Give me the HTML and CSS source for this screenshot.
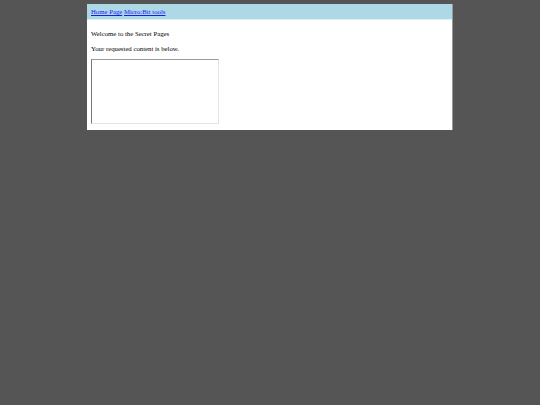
FILE: index.html
```html
<!DOCTYPE html>
<html lang="en">
<head>
    <meta charset="UTF-8">
    <meta name="viewport" content="width=device-width, initial-scale=1.0">
    <title>Secret Pages</title>
    <link rel="stylesheet" href="styles.css">
</head>
<body>
    <div class="page">
        <div class="nav">
            <a href="#">Home Page</a> <a href="#">Micro:Bit tools</a>
        </div>
        <div class="content">
            <p>Welcome to the Secret Pages</p>
            <p class="last">Your requested content is below.</p>
            <div class="frame"></div>
        </div>
    </div>
</body>
</html>
```

FILE: styles.css
```css
body {
    margin: 0;
    background: #555555;
    font-family: 'Liberation Serif', 'Times New Roman', serif;
    font-size: 6.75px;
}

.page {
    width: 366px;
    margin: 4px auto 0;
    background: #fff;
    border-right: 1px solid #9a9a9a;
    box-sizing: border-box;
}

.nav {
    height: 15px;
    line-height: 15px;
    padding: 0 4px;
    background: #add8e6;
    border-bottom: 1px solid #d9eef5;
}

.nav a {
    color: #1a1aee;
}

.content {
    padding: 3px 3px 6px 4px;
    overflow: hidden;
}

.content p {
    margin: 7px 0;
    line-height: 8px;
    color: #000;
}

.content p.last {
    margin-bottom: 6px;
}

.frame {
    width: 128px;
    height: 65px;
    box-sizing: border-box;
    border: 1px solid #e4e4e4;
    border-top-color: #9a9a9a;
    border-left-color: #7a7a7a;
}
```
